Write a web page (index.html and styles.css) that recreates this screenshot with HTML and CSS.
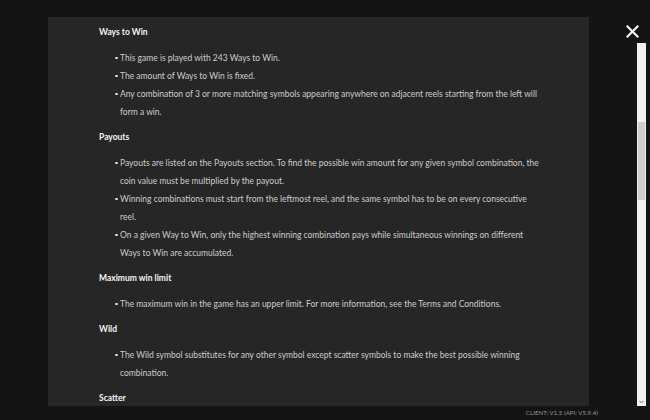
FILE: index.html
```html
<!DOCTYPE html>
<html>
<head>
<meta charset="utf-8">
<link rel="stylesheet" href="styles.css">
</head>
<body>
<div class="screen">
  <div class="panel">
    <div class="content">
      <h3 class="heading">Ways to Win</h3>
      <ul class="list">
        <li>This game is played with 243 Ways to Win.</li>
        <li>The amount of Ways to Win is fixed.</li>
        <li>Any combination of 3 or more matching symbols appearing anywhere on adjacent reels starting from the left will form a win.</li>
      </ul>
      <h3 class="heading">Payouts</h3>
      <ul class="list">
        <li>Payouts are listed on the Payouts section. To find the possible win amount for any given symbol combination, the coin value must be multiplied by the payout.</li>
        <li>Winning combinations must start from the leftmost reel, and the same symbol has to be on every consecutive reel.</li>
        <li>On a given Way to Win, only the highest winning combination pays while simultaneous winnings on different Ways to Win are accumulated.</li>
      </ul>
      <h3 class="heading">Maximum win limit</h3>
      <ul class="list">
        <li>The maximum win in the game has an upper limit. For more information, see the Terms and Conditions.</li>
      </ul>
      <h3 class="heading">Wild</h3>
      <ul class="list">
        <li>The Wild symbol substitutes for any other symbol except scatter symbols to make the best possible winning combination.</li>
      </ul>
      <h3 class="heading">Scatter</h3>
    </div>
  </div>
  <div class="side">
    <div class="close">
      <svg width="13" height="13" viewBox="0 0 13 13"><path d="M1.5 1.5 L11.5 11.5 M11.5 1.5 L1.5 11.5" stroke="#f2f2f2" stroke-width="2.2" stroke-linecap="square"/></svg>
    </div>
    <div class="scrollbar">
      <div class="thumb"></div>
      <div class="arrow">
        <svg width="5" height="4" viewBox="0 0 5 4"><path d="M0.5 0.8 L2.5 3 L4.5 0.8" stroke="#777" stroke-width="1" fill="none"/></svg>
      </div>
    </div>
  </div>
</div>
<div class="version">CLIENT: V1.5 (API: V5.9.4)</div>
</body>
</html>
```
FILE: styles.css
```css
html, body {
  margin: 0;
  padding: 0;
  background: #141414;
  width: 650px;
  height: 420px;
  overflow: hidden;
  font-family: "Lato", "Open Sans", sans-serif;
}
.screen {
  display: flex;
  padding-top: 17px;
  padding-left: 48px;
  height: 389px;
}
.panel {
  width: 545px;
  height: 389px;
  background: #262626;
  overflow: hidden;
}
.content {
  padding: 6px 0 0 51px;
}
.heading {
  margin: 0 0 7.5px 0;
  font-size: 8.5px;
  font-weight: 700;
  line-height: 18px;
  color: #f4f4f4;
}
.list {
  list-style: none;
  margin: 0 0 7.5px 0;
  padding: 0 0 0 21px;
  width: 423px;
}
.list li {
  position: relative;
  font-size: 8.5px;
  line-height: 18px;
  color: #cccccc;
}
.list li::before {
  content: "";
  position: absolute;
  left: -5px;
  top: 8px;
  width: 2.5px;
  height: 2.5px;
  border-radius: 50%;
  background: #dcdcdc;
}
.side {
  width: 57px;
  position: relative;
  display: flex;
  flex-direction: column;
  align-items: flex-end;
  padding-right: 4px;
}
.close {
  width: 13px;
  height: 13px;
  margin: 8px 7px 0 0;
}
.close svg { display: block; }
.scrollbar {
  margin-top: 5px;
  width: 9px;
  height: 365px;
  background: #f1f1f1;
  position: relative;
  display: flex;
  flex-direction: column;
  align-items: center;
}
.thumb {
  margin-top: 79px;
  width: 7px;
  height: 78px;
  background: #cdcdcd;
}
.arrow {
  margin-top: auto;
  margin-bottom: 2px;
  height: 4px;
}
.arrow svg { display: block; }
.version {
  position: absolute;
  right: 52px;
  top: 409px;
  font-family: "Lato", sans-serif;
  font-size: 6px;
  color: #9a9a9a;
  letter-spacing: 0.1px;
}
```
